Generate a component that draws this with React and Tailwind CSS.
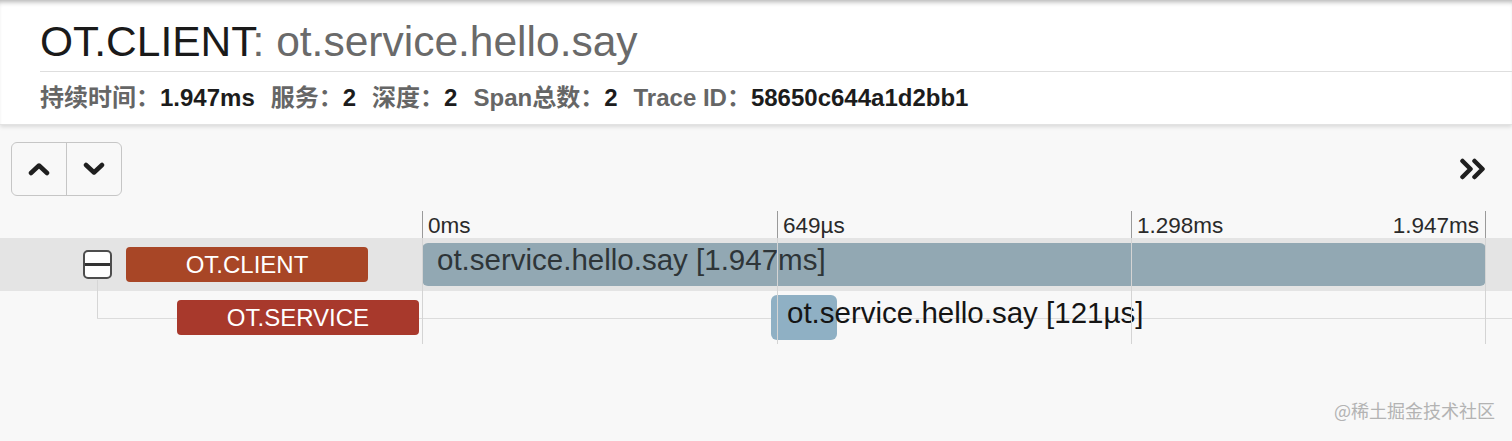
const FONT = "font-['Liberation_Sans','Noto_Sans_CJK_SC',sans-serif]";

/* =====================
   ICONS
===================== */
const ChevronUp = () => (
  <svg width="22" height="14" viewBox="0 0 22 14" fill="none">
    <path d="M3 11 L11 3.5 L19 11" stroke="#1f1f1f" strokeWidth="4.5" strokeLinecap="round" strokeLinejoin="round" />
  </svg>
);

const ChevronDown = () => (
  <svg width="22" height="14" viewBox="0 0 22 14" fill="none">
    <path d="M3 3 L11 10.5 L19 3" stroke="#1f1f1f" strokeWidth="4.5" strokeLinecap="round" strokeLinejoin="round" />
  </svg>
);

const ChevronsRight = () => (
  <svg width="28" height="22" viewBox="0 0 28 22" fill="none">
    <path d="M3.5 3 L11.5 11 L3.5 19" stroke="#1f1f1f" strokeWidth="4.5" strokeLinecap="round" strokeLinejoin="round" />
    <path d="M15.5 3 L23.5 11 L15.5 19" stroke="#1f1f1f" strokeWidth="4.5" strokeLinecap="round" strokeLinejoin="round" />
  </svg>
);

/* =====================
   HEADER
===================== */
const Meta = ({ label, value }) => (
  <span className="mr-[16px] whitespace-nowrap">
    <span className="text-[#666]">{label}</span>
    <span className="text-[#1c1c1c]">{value}</span>
  </span>
);

const TraceHeader = () => (
  <header className="bg-white pl-10 pt-[21px] pb-[12px] border-b border-[#e2e2e2] shadow-[inset_0_5px_5px_-3px_rgba(0,0,0,0.3),0_2px_4px_rgba(0,0,0,0.12)]">
    <h1 className="text-[42.5px] leading-[42px] text-[#1a1a1a] whitespace-nowrap">
      OT.CLIENT<span className="text-[#6a6a6a]">: ot.service.hello.say</span>
    </h1>
    <div className="mt-[8px] border-t border-[#dedede] pt-[12px] text-[24px] leading-[28px] font-bold flex">
      <Meta label="持续时间：" value="1.947ms" />
      <Meta label="服务：" value="2" />
      <Meta label="深度：" value="2" />
      <Meta label="Span总数：" value="2" />
      <Meta label="Trace ID：" value="58650c644a1d2bb1" />
    </div>
  </header>
);

/* =====================
   TIMELINE
===================== */
const SpanLabel = ({ name, color }) => (
  <div className={`w-[242px] h-[35px] rounded-[4px] ${color} text-white text-[24px] leading-[35px] text-center`}>
    {name}
  </div>
);

const App = () => (
  <div className={`w-[1512px] h-[441px] bg-[#f8f8f8] overflow-hidden relative ${FONT}`}>
    <TraceHeader />

    {/* TOOLBAR */}
    <div className="flex items-center justify-between pl-[11px] pr-[25px] mt-[17px]">
      <div className="flex h-[54px] border border-[#c6c6c6] rounded-[6px] bg-[#f8f8f8]">
        <div className="w-[55px] flex items-center justify-center border-r border-[#c6c6c6]">
          <ChevronUp />
        </div>
        <div className="w-[54px] flex items-center justify-center">
          <ChevronDown />
        </div>
      </div>
      <ChevronsRight />
    </div>

    {/* TIMELINE */}
    <div className="relative mt-[15px]">
      {/* tick header */}
      <div className="flex h-[27px]">
        <div className="w-[422px]" />
        <div className="flex text-[22.5px] leading-[24px] text-[#2a2a2a]">
          <div className="w-[355px] border-l border-[#9a9a9a] pl-[5px] pt-[3px]">0ms</div>
          <div className="w-[354px] border-l border-[#9a9a9a] pl-[5px] pt-[3px]">649µs</div>
          <div className="w-[355px] border-x border-[#9a9a9a] pl-[5px] pr-[6px] pt-[3px] flex justify-between">
            <span>1.298ms</span>
            <span>1.947ms</span>
          </div>
        </div>
      </div>

      {/* row 1 */}
      <div className="flex h-[53px] bg-[#e4e4e4]">
        <div className="w-[422px] flex items-center">
          <div className="ml-[83px] w-[29px] h-[29px] rounded-[5px] border-2 border-[#4d4d4d] bg-white flex items-center">
            <div className="w-full h-[3px] bg-[#333]" />
          </div>
          <div className="ml-[14px]">
            <SpanLabel name="OT.CLIENT" color="bg-[#a84626]" />
          </div>
        </div>
        <div className="w-[1064px] py-[5px]">
          <div className="h-full rounded-[6px] bg-[#92a8b3] pl-[15px] text-[29.5px] leading-[34px] text-[#2e3538] whitespace-nowrap">
            ot.service.hello.say [1.947ms]
          </div>
        </div>
      </div>

      {/* row 2 */}
      <div className="relative flex h-[53px]">
        <div className="absolute left-[97px] top-[-11px] w-px h-[38px] bg-[#d6d6d6]" />
        <div className="absolute left-[97px] right-0 top-[27px] h-px bg-[#dcdcdc]" />
        <div className="relative w-[422px] flex items-center pl-[177px]">
          <SpanLabel name="OT.SERVICE" color="bg-[#a8392c]" />
        </div>
        <div className="relative w-[1064px] py-[4px]">
          <div className="ml-[349px] w-[66px] h-full rounded-[6px] bg-[#8fb0c4] pl-[16px] text-[29.5px] leading-[36px] text-[#151515] whitespace-nowrap">
            ot.service.hello.say [121µs]
          </div>
        </div>
      </div>

      {/* light tick lines across rows */}
      <div className="absolute left-[422px] top-[27px] bottom-0 flex pointer-events-none">
        <div className="w-[355px] border-l border-[#d4d4d4]" />
        <div className="w-[354px] border-l border-[#d4d4d4]" />
        <div className="w-[355px] border-x border-[#d4d4d4]" />
      </div>
    </div>

    {/* watermark */}
    <div className="absolute right-[17px] bottom-[17px] text-[18px] text-[#b3b3b3] font-['Noto_Sans_CJK_SC',sans-serif]">
      @稀土掘金技术社区
    </div>
  </div>
);

export default App;
